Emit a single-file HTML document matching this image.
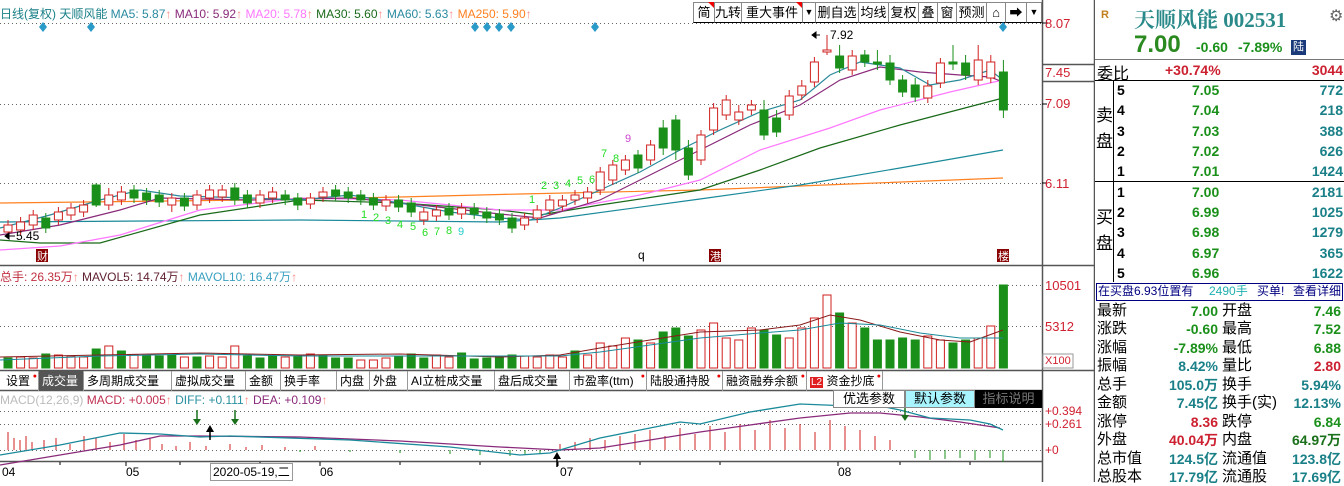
<!DOCTYPE html>
<html><head><meta charset="utf-8"><style>
*{margin:0;padding:0;box-sizing:border-box}
body{width:1344px;height:482px;background:#fff;position:relative;overflow:hidden;font-family:"Liberation Sans","Noto Sans CJK SC",sans-serif;font-size:13px}
.a{position:absolute;white-space:nowrap}
.tb{position:absolute;top:2px;height:21px;border:1px solid #888;border-bottom:1px solid #000;font-size:13px;line-height:19px;text-align:center;color:#000;background:#fff;white-space:nowrap;overflow:hidden}
.tab{position:absolute;top:371px;height:20px;border-right:1px solid #999;font-size:12px;line-height:20px;padding-left:3px;color:#000;white-space:nowrap;overflow:hidden}
.dot{position:absolute;top:-4px;right:1px;color:#e00;font-size:7px}
.n{font-weight:bold;font-size:14px}
.g{color:#1a901a}.r{color:#cc2030}.t{color:#1a8088}
.lab{position:absolute;left:1097px;font-size:15px;line-height:18px;color:#000;white-space:nowrap}
.lab2{position:absolute;left:1222px;font-size:15px;line-height:18px;color:#000;white-space:nowrap}
.v1{position:absolute;right:126px;font-weight:bold;font-size:14px;line-height:18px;white-space:nowrap}
.v2{position:absolute;right:3px;font-weight:bold;font-size:14px;line-height:18px;white-space:nowrap}
.ax{position:absolute;left:1045px;color:#d02030;font-size:13px}
.red{fill:#fff;stroke:#d02020;stroke-width:1}
.grn{fill:#1a8f1a;stroke:#1a8f1a;stroke-width:1}
</style></head><body>

<div class="a" style="left:0;top:5px;font-size:12px;color:#1a8088">日线(复权) 天顺风能 <span style="color:#2a8aa0">MA5: 5.87</span><span style="color:#f88">↑</span> <span style="color:#8a2a7a">MA10: 5.92</span><span style="color:#f88">↑</span> <span style="color:#ff77ff">MA20: 5.78</span><span style="color:#f88">↑</span> <span style="color:#1a6a1a">MA30: 5.60</span><span style="color:#f88">↑</span> <span style="color:#2a8aa0">MA60: 5.63</span><span style="color:#f88">↑</span> <span style="color:#ff8020">MA250: 5.90</span><span style="color:#f88">↑</span></div>

<div class="tb" style="left:693px;width:22px">简</div>
<div class="tb" style="left:714px;width:28px">九转</div>
<div class="tb" style="left:741px;width:62px">重大事件</div>
<div class="tb" style="left:802px;width:14px;font-size:9px">▼</div>
<div class="tb" style="left:815px;width:44px">删自选</div>
<div class="tb" style="left:858px;width:31px">均线</div>
<div class="tb" style="left:888px;width:31px">复权</div>
<div class="tb" style="left:918px;width:20px">叠</div>
<div class="tb" style="left:937px;width:20px">窗</div>
<div class="tb" style="left:956px;width:31px">预测</div>
<div class="tb" style="left:986px;width:20px">⌂</div>
<div class="tb" style="left:1005px;width:22px">➡</div>
<div class="tb" style="left:1026px;width:16px;font-size:9px">▼</div>
<div class="a" style="left:708px;top:2px;width:0;height:0;border-left:6px solid transparent;border-top:6px solid #e00"></div>
<div class="a" style="left:796px;top:2px;width:0;height:0;border-left:6px solid transparent;border-top:6px solid #e00"></div>

<svg class="a" style="left:0;top:0" width="1095" height="482">
<g stroke="#666" stroke-dasharray="1,3" stroke-width="1">
<line x1="0" y1="23.5" x2="1042" y2="23.5"/><line x1="0" y1="104.5" x2="1042" y2="104.5"/><line x1="0" y1="183.5" x2="1042" y2="183.5"/>
<line x1="0" y1="285.5" x2="1042" y2="285.5"/><line x1="0" y1="326.5" x2="1042" y2="326.5"/>
<line x1="0" y1="411.5" x2="1042" y2="411.5"/><line x1="0" y1="424.5" x2="1042" y2="424.5"/><line x1="0" y1="450.5" x2="1042" y2="450.5"/>
</g>
<g stroke="#555" stroke-width="1.5">
<line x1="0" y1="265.5" x2="1095" y2="265.5"/><line x1="0" y1="370.5" x2="1095" y2="370.5"/><line x1="0" y1="390.5" x2="1042" y2="390.5"/><line x1="0" y1="461.5" x2="1042" y2="461.5"/>
<line x1="1042.5" y1="0" x2="1042.5" y2="482"/><line x1="1094.5" y1="0" x2="1094.5" y2="482"/>
<line x1="1042" y1="64.5" x2="1095" y2="64.5"/><line x1="1042" y1="81.5" x2="1095" y2="81.5"/>
</g>
<g stroke="#000"><line x1="1042" y1="23" x2="1047" y2="23"/><line x1="1042" y1="104" x2="1047" y2="104"/><line x1="1042" y1="183" x2="1047" y2="183"/></g>
<g fill="#2a9ac8">
<path d="M43 22l4 5-4 5-4-5z"/><path d="M91 22l4 5-4 5-4-5z"/><path d="M475 22l4 5-4 5-4-5z"/><path d="M487 22l4 5-4 5-4-5z"/><path d="M499 22l4 5-4 5-4-5z"/><path d="M511 22l4 5-4 5-4-5z"/><path d="M595 22l4 5-4 5-4-5z"/><path d="M1003 22l4 5-4 5-4-5z"/>
</g>
<polyline fill="none" stroke="#ff8020" stroke-width="1.2" points="0,203 250,200 400,197 520,194 700,190 850,184 1003,178"/>
<polyline fill="none" stroke="#1a8a9a" stroke-width="1.2" points="0,222 300,220 500,222 560,218 700,199 800,185 900,168 1003,150"/>
<polyline fill="none" stroke="#1a6a1a" stroke-width="1.2" points="0,240 40,243 100,243 200,215 300,200 400,203 500,210 540,215 600,205 700,190 760,170 820,148 900,125 1003,98"/>
<polyline fill="none" stroke="#ff77ff" stroke-width="1.2" points="0,250 60,246 120,235 200,210 300,198 400,200 500,210 560,210 640,195 700,180 760,150 830,128 880,110 950,92 1003,80"/>
<polyline fill="none" stroke="#8a2a7a" stroke-width="1.2" points="0,235 60,225 120,210 160,198 250,200 350,198 420,205 500,214 540,218 600,200 650,175 700,150 750,125 800,105 840,80 880,67 920,72 960,75 990,77 1003,82"/>
<polyline fill="none" stroke="#2a8a9a" stroke-width="1.2" points="0,228 50,215 100,200 140,190 180,196 250,198 300,200 350,195 400,203 450,212 500,218 530,220 560,208 600,190 640,172 680,150 720,130 760,112 800,100 830,75 860,62 900,68 930,85 960,80 990,70 1003,80"/>
<path stroke="#d02020" fill="none" d="M8 220V237M20.6 217V235M33.2 210V230M58.4 207V225M71 203V220M83.6 200V217M108.8 188V210M121.4 186V205M171.8 193V212M197 190V210M209.6 185V203M222.2 185V202M260 190V208M272.6 187V203M310.4 193V209M323 187V202M386 195V211M423.8 207V225M436.4 205V221M461.6 203V219M524.6 213V230M537.2 205V223M549.8 195V215M562.4 195V211M575 190V205M587.6 187V203M600.2 167V195M612.8 160V185M625.4 155V175M650.6 140V165M701 130V165M713.6 103V135M726.2 95V120M738.8 105V125M751.4 100V115M789.2 90V120M801.8 80V100M814.4 57V87M827 35V55M852.2 50V75M927.8 80V103M940.4 58V88M978.2 45V85M990.8 55V83"/>
<path stroke="#1a8f1a" fill="none" d="M45.8 213V233M96.2 183V207M134 185V203M146.6 188V205M159.2 190V207M184.4 193V211M234.8 183V205M247.4 190V208M285.2 190V205M297.8 193V210M335.6 185V201M348.2 187V203M360.8 190V205M373.4 193V210M398.6 195V212M411.2 198V217M449 203V220M474.2 203V219M486.8 207V223M499.4 209V225M512 213V233M638 150V173M663.2 120V155M675.8 115V160M688.4 140V180M764 100V140M776.6 110V137M839.6 45V73M864.8 50V67M877.4 50V70M890 55V85M902.6 75V97M915.2 78V102M953 45V70M965.6 55V80M1003.4 60V118"/>
<g class="red">
<rect x="4" y="225" width="8" height="7"/><rect x="16.6" y="222" width="8" height="8"/><rect x="29.2" y="215" width="8" height="10"/><rect x="54.4" y="212" width="8" height="8"/><rect x="67" y="208" width="8" height="7"/><rect x="79.6" y="205" width="8" height="7"/><rect x="104.8" y="195" width="8" height="10"/><rect x="117.4" y="192" width="8" height="8"/><rect x="167.8" y="198" width="8" height="7"/><rect x="193" y="195" width="8" height="10"/><rect x="205.6" y="190" width="8" height="8"/><rect x="218.2" y="190" width="8" height="7"/><rect x="256" y="195" width="8" height="8"/><rect x="268.6" y="192" width="8" height="6"/><rect x="306.4" y="198" width="8" height="6"/><rect x="319" y="192" width="8" height="5"/><rect x="382" y="200" width="8" height="6"/><rect x="419.8" y="212" width="8" height="8"/><rect x="432.4" y="210" width="8" height="6"/><rect x="457.6" y="208" width="8" height="6"/><rect x="520.6" y="218" width="8" height="7"/><rect x="533.2" y="210" width="8" height="8"/><rect x="545.8" y="200" width="8" height="10"/><rect x="558.4" y="200" width="8" height="6"/><rect x="571" y="195" width="8" height="5"/><rect x="583.6" y="192" width="8" height="6"/><rect x="596.2" y="172" width="8" height="18"/><rect x="608.8" y="165" width="8" height="15"/><rect x="621.4" y="160" width="8" height="10"/><rect x="646.6" y="145" width="8" height="15"/><rect x="697" y="135" width="8" height="25"/><rect x="709.6" y="108" width="8" height="22"/><rect x="722.2" y="100" width="8" height="15"/><rect x="734.8" y="112" width="8" height="8"/><rect x="747.4" y="105" width="8" height="5"/><rect x="785.2" y="96" width="8" height="19"/><rect x="797.8" y="86" width="8" height="9"/><rect x="810.4" y="62" width="8" height="20"/><rect x="823" y="50" width="8" height="2"/><rect x="848.2" y="56" width="8" height="14"/><rect x="923.8" y="86" width="8" height="12"/><rect x="936.4" y="63" width="8" height="20"/><rect x="974.2" y="60" width="8" height="20"/><rect x="986.8" y="62" width="8" height="16"/>
</g>
<g class="grn">
<rect x="41.8" y="218" width="8" height="10"/><rect x="92.2" y="185" width="8" height="20"/><rect x="130" y="190" width="8" height="8"/><rect x="142.6" y="193" width="8" height="7"/><rect x="155.2" y="195" width="8" height="7"/><rect x="180.4" y="198" width="8" height="8"/><rect x="230.8" y="188" width="8" height="12"/><rect x="243.4" y="195" width="8" height="8"/><rect x="281.2" y="195" width="8" height="5"/><rect x="293.8" y="198" width="8" height="7"/><rect x="331.6" y="190" width="8" height="6"/><rect x="344.2" y="192" width="8" height="6"/><rect x="356.8" y="195" width="8" height="5"/><rect x="369.4" y="198" width="8" height="7"/><rect x="394.6" y="200" width="8" height="7"/><rect x="407.2" y="203" width="8" height="9"/><rect x="445" y="208" width="8" height="7"/><rect x="470.2" y="208" width="8" height="6"/><rect x="482.8" y="212" width="8" height="6"/><rect x="495.4" y="214" width="8" height="6"/><rect x="508" y="218" width="8" height="10"/><rect x="634" y="155" width="8" height="13"/><rect x="659.2" y="128" width="8" height="20"/><rect x="671.8" y="120" width="8" height="30"/><rect x="684.4" y="148" width="8" height="27"/><rect x="760" y="110" width="8" height="25"/><rect x="772.6" y="118" width="8" height="14"/><rect x="835.6" y="56" width="8" height="12"/><rect x="860.8" y="55" width="8" height="7"/><rect x="873.4" y="62" width="8" height="2"/><rect x="886" y="63" width="8" height="17"/><rect x="898.6" y="80" width="8" height="12"/><rect x="911.2" y="85" width="8" height="12"/><rect x="949" y="62" width="8" height="2"/><rect x="961.6" y="63" width="8" height="12"/><rect x="999.4" y="72" width="8" height="38"/>
</g>
<path d="M820 35h-8M812 35l4-3v6z" stroke="#000" fill="#000"/>
<text x="830" y="39" font-size="12" fill="#000">7.92</text>
<path d="M5 236h10M5 236l4-3v6z" stroke="#000" fill="#000"/>
<text x="16" y="240" font-size="12" fill="#000">5.45</text>
<g font-size="11" fill="#22dd22">
<text x="361" y="218">1</text><text x="373" y="221">2</text><text x="385" y="224">3</text><text x="397" y="228">4</text><text x="410" y="230">5</text><text x="422" y="236">6</text><text x="434" y="235">7</text><text x="446" y="234">8</text><text x="458" y="235" fill="#22cccc">9</text>
<text x="529" y="203">1</text><text x="541" y="189">2</text><text x="553" y="189">3</text><text x="565" y="187">4</text><text x="577" y="184">5</text><text x="589" y="183">6</text><text x="601" y="157">7</text><text x="613" y="162">8</text><text x="625" y="142" fill="#cc44cc">9</text>
</g>
<rect x="36" y="249" width="12" height="13" fill="#800"/><text x="37" y="260" font-size="11" fill="#fff">财</text>
<text x="638" y="259" font-size="12" fill="#000">q</text>
<rect x="709" y="249" width="12" height="13" fill="#800"/><text x="710" y="260" font-size="11" fill="#fff">港</text>
<rect x="997" y="249" width="12" height="13" fill="#800"/><text x="998" y="260" font-size="11" fill="#fff">楼</text>

<g class="grn">
<rect x="4" y="358" width="8" height="10"/><rect x="41.8" y="354" width="8" height="14"/><rect x="92.2" y="349" width="8" height="19"/><rect x="117.4" y="351" width="8" height="17"/><rect x="142.6" y="356" width="8" height="12"/><rect x="155.2" y="356" width="8" height="12"/><rect x="167.8" y="355" width="8" height="13"/><rect x="193" y="357" width="8" height="11"/><rect x="243.4" y="356" width="8" height="12"/><rect x="256" y="358" width="8" height="10"/><rect x="268.6" y="356" width="8" height="12"/><rect x="293.8" y="356" width="8" height="12"/><rect x="319" y="355" width="8" height="13"/><rect x="331.6" y="358" width="8" height="10"/><rect x="344.2" y="358" width="8" height="10"/><rect x="394.6" y="356" width="8" height="12"/><rect x="407.2" y="354" width="8" height="14"/><rect x="419.8" y="358" width="8" height="10"/><rect x="457.6" y="353" width="8" height="15"/><rect x="470.2" y="359" width="8" height="9"/><rect x="482.8" y="358" width="8" height="10"/><rect x="495.4" y="357" width="8" height="11"/><rect x="508" y="355" width="8" height="13"/><rect x="571" y="351" width="8" height="17"/><rect x="634" y="340" width="8" height="28"/><rect x="659.2" y="332" width="8" height="36"/><rect x="671.8" y="328" width="8" height="40"/><rect x="684.4" y="336" width="8" height="32"/><rect x="760" y="330" width="8" height="38"/><rect x="772.6" y="335" width="8" height="33"/><rect x="835.6" y="313" width="8" height="55"/><rect x="860.8" y="328" width="8" height="40"/><rect x="873.4" y="340" width="8" height="28"/><rect x="886" y="340" width="8" height="28"/><rect x="898.6" y="338" width="8" height="30"/><rect x="911.2" y="340" width="8" height="28"/><rect x="949" y="343" width="8" height="25"/><rect x="961.6" y="340" width="8" height="28"/><rect x="999.4" y="285" width="8" height="83"/>
</g>
<g class="red">
<rect x="16.6" y="357" width="8" height="11"/><rect x="29.2" y="358" width="8" height="10"/><rect x="54.4" y="355" width="8" height="13"/><rect x="67" y="356" width="8" height="12"/><rect x="79.6" y="357" width="8" height="11"/><rect x="104.8" y="346" width="8" height="22"/><rect x="130" y="355" width="8" height="13"/><rect x="180.4" y="357" width="8" height="11"/><rect x="205.6" y="356" width="8" height="12"/><rect x="218.2" y="357" width="8" height="11"/><rect x="230.8" y="346" width="8" height="22"/><rect x="281.2" y="357" width="8" height="11"/><rect x="306.4" y="354" width="8" height="14"/><rect x="356.8" y="360" width="8" height="8"/><rect x="369.4" y="360" width="8" height="8"/><rect x="382" y="358" width="8" height="10"/><rect x="432.4" y="355" width="8" height="13"/><rect x="445" y="357" width="8" height="11"/><rect x="520.6" y="356" width="8" height="12"/><rect x="533.2" y="357" width="8" height="11"/><rect x="545.8" y="355" width="8" height="13"/><rect x="558.4" y="357" width="8" height="11"/><rect x="583.6" y="355" width="8" height="13"/><rect x="596.2" y="343" width="8" height="25"/><rect x="608.8" y="346" width="8" height="22"/><rect x="621.4" y="338" width="8" height="30"/><rect x="646.6" y="343" width="8" height="25"/><rect x="697" y="330" width="8" height="38"/><rect x="709.6" y="323" width="8" height="45"/><rect x="722.2" y="338" width="8" height="30"/><rect x="734.8" y="340" width="8" height="28"/><rect x="747.4" y="328" width="8" height="40"/><rect x="785.2" y="338" width="8" height="30"/><rect x="797.8" y="328" width="8" height="40"/><rect x="810.4" y="318" width="8" height="50"/><rect x="823" y="295" width="8" height="73"/><rect x="848.2" y="323" width="8" height="45"/><rect x="923.8" y="336" width="8" height="32"/><rect x="936.4" y="340" width="8" height="28"/><rect x="974.2" y="338" width="8" height="30"/><rect x="986.8" y="326" width="8" height="42"/>
</g>
<polyline fill="none" stroke="#8a1a1a" points="0,357 100,355 200,353 300,355 400,354 500,357 560,355 600,348 650,340 700,332 760,330 800,325 830,315 860,320 900,332 940,340 970,342 1003,330"/>
<polyline fill="none" stroke="#1a8a9a" points="0,360 100,356 200,354 300,356 400,356 500,356 560,356 600,352 650,345 700,338 760,333 800,330 840,323 880,325 920,333 960,338 1003,338"/>

<path stroke="#d02020" d="M8 450V432M14 450V438M20 450V440M26 450V436M32 450V442M44 450V440M56 450V438M70 450V444M84 450V436M96 450V438M110 450V442M124 450V434M136 450V440M150 450V438M162 450V444M176 450V446M190 450V442M206 450V446M230 450V444M246 450V447M262 450V445M285 450V447M315 450V446M560 450V444M575 450V442M590 450V438M605 450V440M620 450V436M635 450V434M650 450V430M665 450V436M680 450V428M695 450V434M710 450V426M725 450V432M740 450V424M755 450V430M770 450V420M785 450V428M800 450V424M815 450V432M830 450V420M845 450V426M860 450V430M875 450V436M890 450V440"/>
<path stroke="#1a8f1a" d="M300 450V452M350 450V452M400 450V453M450 450V454M480 450V455M510 450V456M525 450V455M540 450V454M915 450V458M930 450V460M945 450V459M960 450V458M975 450V460M990 450V458M1003 450V462"/>
<polyline fill="none" stroke="#8a2a7a" stroke-width="1.3" points="0,465 60,455 120,445 160,436 200,436 300,437 400,441 500,447 560,450 600,448 650,440 700,432 750,425 800,418 850,413 880,413 920,417 960,422 1000,428"/>
<polyline fill="none" stroke="#1a8a9a" stroke-width="1.3" points="0,455 60,445 120,433 160,434 200,437 230,436 350,440 450,447 520,455 550,453 600,438 650,428 680,422 700,424 750,412 800,404 850,406 880,406 900,410 930,418 970,420 990,424 1003,430"/>
<g stroke-width="1.5">
<path d="M197 410v12" stroke="#1a701a"/><path d="M193 419l4 6 4-6z" fill="#1a701a"/>
<path d="M235 410v12" stroke="#1a701a"/><path d="M231 419l4 6 4-6z" fill="#1a701a"/>
<path d="M905 408v10" stroke="#1a701a"/><path d="M901 415l4 6 4-6z" fill="#1a701a"/>
<path d="M210 428v12" stroke="#000"/><path d="M206 432l4-7 4 7z" fill="#000"/>
<path d="M557 455v12" stroke="#000"/><path d="M553 459l4-7 4 7z" fill="#000"/>
</g>
<g stroke="#000"><path d="M126 462v4M320 462v4M558 462v4M838 462v4M60 462v3M180 462v3M260 462v3M400 462v3M480 462v3M640 462v3M720 462v3M900 462v3M970 462v3"/></g>
<g font-size="12" fill="#000"><text x="2" y="476">04</text><text x="126" y="476">05</text><text x="320" y="476">06</text><text x="560" y="476">07</text><text x="838" y="476">08</text></g>
<rect x="210.5" y="463.5" width="82" height="17" fill="#fff" stroke="#999"/>
<text x="213" y="476" font-size="12" fill="#000">2020-05-19,二</text>
<rect x="1043" y="354" width="30" height="14" fill="#fff" stroke="#999"/>
</svg>

<div class="ax" style="top:16px">8.07</div>
<div class="ax" style="top:65px">7.45</div>
<div class="ax" style="top:96px">7.09</div>
<div class="ax" style="top:176px">6.11</div>
<div class="ax" style="top:278px">10501</div>
<div class="ax" style="top:319px">5312</div>
<div class="ax" style="top:355px;font-size:11px;color:#d02030">X100</div>
<div class="ax" style="top:404px;font-size:12px">+0.394</div>
<div class="ax" style="top:417px;font-size:12px">+0.261</div>
<div class="ax" style="top:443px;font-size:12px">+0</div>

<div class="a" style="left:0;top:268px;font-size:12px"><span style="color:#c03040">总手: 26.35万</span><span style="color:#f88">↑</span> <span style="color:#602030">MAVOL5: 14.74万</span><span style="color:#f88">↑</span> <span style="color:#3aa0c0">MAVOL10: 16.47万</span><span style="color:#f88">↑</span></div>

<div class="tab" style="left:3px;width:36px">设置<span class="dot">●</span></div>
<div class="tab" style="left:39px;width:45px;background:#555;color:#fff">成交量</div>
<div class="tab" style="left:84px;width:88px">多周期成交量</div>
<div class="tab" style="left:172px;width:74px">虚拟成交量</div>
<div class="tab" style="left:246px;width:35px">金额</div>
<div class="tab" style="left:281px;width:56px">换手率</div>
<div class="tab" style="left:337px;width:33px">内盘</div>
<div class="tab" style="left:370px;width:38px">外盘</div>
<div class="tab" style="left:408px;width:87px">AI立桩成交量</div>
<div class="tab" style="left:495px;width:75px">盘后成交量</div>
<div class="tab" style="left:570px;width:77px">市盈率(ttm)<span class="dot">●</span></div>
<div class="tab" style="left:647px;width:76px">陆股通持股<span class="dot">●</span></div>
<div class="tab" style="left:723px;width:84px">融资融券余额<span class="dot">●</span></div>
<div class="tab" style="left:807px;width:76px"><span style="background:#e02020;color:#fff;font-size:10px;padding:0 1px">L2</span> 资金抄底<span class="dot">●</span></div>

<div class="a" style="left:0;top:393px;font-size:12px"><span style="color:#bbb">MACD(12,26,9)</span> <span style="color:#c03050">MACD: +0.005</span><span style="color:#f88">↑</span> <span style="color:#2a90a0">DIFF: +0.111</span><span style="color:#f88">↑</span> <span style="color:#8a2a7a">DEA: +0.109</span><span style="color:#f88">↑</span></div>
<div class="a" style="left:833px;top:390px;width:72px;height:18px;border:1px solid #888;font-size:13px;line-height:16px;text-align:center;background:#fff">优选参数</div>
<div class="a" style="left:905px;top:390px;width:70px;height:18px;border:1px solid #888;font-size:13px;line-height:16px;text-align:center;background:#a8f4ff">默认参数</div>
<div class="a" style="left:975px;top:390px;width:67px;height:18px;font-size:13px;line-height:18px;text-align:center;background:#000;color:#777">指标说明</div>

<div class="a" style="left:1101px;top:9px;font-size:11px;font-weight:bold;color:#c08020">R</div>
<div class="a" style="left:1134px;top:4px;font-size:21px;font-weight:bold;color:#2a8a8a;font-family:'Liberation Serif','Noto Serif CJK SC',serif">天顺风能 002531</div>
<div class="a" style="left:1329px;top:6px;font-size:16px;color:#666">⚙</div>
<div class="a" style="left:1134px;top:31px;font-size:24px;font-weight:bold;color:#2a8a20">7.00</div>
<div class="a g" style="left:1196px;top:39px;font-size:14px;font-weight:bold">-0.60</div>
<div class="a g" style="left:1238px;top:39px;font-size:14px;font-weight:bold">-7.89%</div>
<div class="a" style="left:1291px;top:40px;width:15px;height:15px;background:#1a3a7a;color:#fff;font-size:11px;line-height:15px;text-align:center">陆</div>
<div class="a" style="left:1095px;top:59px;width:249px;border-top:1px solid #777"></div>
<div class="a" style="left:1097px;top:60px;font-size:16px">委比</div>
<div class="a r n" style="left:1165px;top:62px">+30.74%</div>
<div class="a r n" style="right:1px;top:62px">3044</div>
<div class="a" style="left:1095px;top:80px;width:249px;border-top:1.5px solid #000"></div>
<div class="a" style="left:1113px;top:80px;height:202px;border-left:1px solid #000"></div>
<div class="a" style="left:1095px;top:181px;width:249px;border-top:1.5px solid #000"></div>
<div class="a" style="left:1096px;top:103px;font-size:17px;line-height:26px;width:16px;white-space:normal">卖盘</div>
<div class="a" style="left:1096px;top:205px;font-size:17px;line-height:26px;width:16px;white-space:normal">买盘</div>

<div class="a n" style="left:1117px;top:82px">5</div><div class="a g n" style="left:1192px;top:82px">7.05</div><div class="a t n" style="right:1px;top:82px">772</div>
<div class="a n" style="left:1117px;top:102px">4</div><div class="a g n" style="left:1192px;top:102px">7.04</div><div class="a t n" style="right:1px;top:102px">218</div>
<div class="a n" style="left:1117px;top:123px">3</div><div class="a g n" style="left:1192px;top:123px">7.03</div><div class="a t n" style="right:1px;top:123px">388</div>
<div class="a n" style="left:1117px;top:143px">2</div><div class="a g n" style="left:1192px;top:143px">7.02</div><div class="a t n" style="right:1px;top:143px">626</div>
<div class="a n" style="left:1117px;top:163px">1</div><div class="a g n" style="left:1192px;top:163px">7.01</div><div class="a t n" style="right:1px;top:163px">1424</div>
<div class="a n" style="left:1117px;top:184px">1</div><div class="a g n" style="left:1192px;top:184px">7.00</div><div class="a t n" style="right:1px;top:184px">2181</div>
<div class="a n" style="left:1117px;top:204px">2</div><div class="a g n" style="left:1192px;top:204px">6.99</div><div class="a t n" style="right:1px;top:204px">1025</div>
<div class="a n" style="left:1117px;top:224px">3</div><div class="a g n" style="left:1192px;top:224px">6.98</div><div class="a t n" style="right:1px;top:224px">1279</div>
<div class="a n" style="left:1117px;top:245px">4</div><div class="a g n" style="left:1192px;top:245px">6.97</div><div class="a t n" style="right:1px;top:245px">365</div>
<div class="a n" style="left:1117px;top:265px">5</div><div class="a g n" style="left:1192px;top:265px">6.96</div><div class="a t n" style="right:1px;top:265px">1622</div>

<div class="a" style="left:1096px;top:283px;width:247px;height:18px;border:1.5px solid #000080;font-size:12px;line-height:15px;color:#000080;padding-left:1px;overflow:hidden">在买盘6.93位置有<span style="position:absolute;left:112px;color:#20b0b0">2490手</span><span style="position:absolute;left:160px">买单!</span><span style="position:absolute;left:196px">查看详细</span></div>

<div class="lab" style="top:302px">最新</div><div class="v1 g" style="top:302px">7.00</div><div class="lab2" style="top:302px">开盘</div><div class="v2 g" style="top:302px">7.46</div>
<div class="lab" style="top:320px">涨跌</div><div class="v1 g" style="top:320px">-0.60</div><div class="lab2" style="top:320px">最高</div><div class="v2 g" style="top:320px">7.52</div>
<div class="lab" style="top:339px">涨幅</div><div class="v1 g" style="top:339px">-7.89%</div><div class="lab2" style="top:339px">最低</div><div class="v2 g" style="top:339px">6.88</div>
<div class="lab" style="top:357px">振幅</div><div class="v1 t" style="top:357px">8.42%</div><div class="lab2" style="top:357px">量比</div><div class="v2 r" style="top:357px">2.80</div>
<div class="lab" style="top:376px">总手</div><div class="v1 t" style="top:376px">105.0万</div><div class="lab2" style="top:376px">换手</div><div class="v2 t" style="top:376px">5.94%</div>
<div class="lab" style="top:394px">金额</div><div class="v1 t" style="top:394px">7.45亿</div><div class="lab2" style="top:394px">换手(实)</div><div class="v2 t" style="top:394px">12.13%</div>
<div class="lab" style="top:413px">涨停</div><div class="v1 r" style="top:413px">8.36</div><div class="lab2" style="top:413px">跌停</div><div class="v2 g" style="top:413px">6.84</div>
<div class="lab" style="top:431px">外盘</div><div class="v1 r" style="top:431px">40.04万</div><div class="lab2" style="top:431px">内盘</div><div class="v2" style="top:431px;color:#1a701a">64.97万</div>
<div class="lab" style="top:450px">总市值</div><div class="v1 t" style="top:450px">124.5亿</div><div class="lab2" style="top:450px">流通值</div><div class="v2 t" style="top:450px">123.8亿</div>
<div class="lab" style="top:468px">总股本</div><div class="v1 t" style="top:468px">17.79亿</div><div class="lab2" style="top:468px">流通股</div><div class="v2 t" style="top:468px">17.69亿</div>
</body></html>
